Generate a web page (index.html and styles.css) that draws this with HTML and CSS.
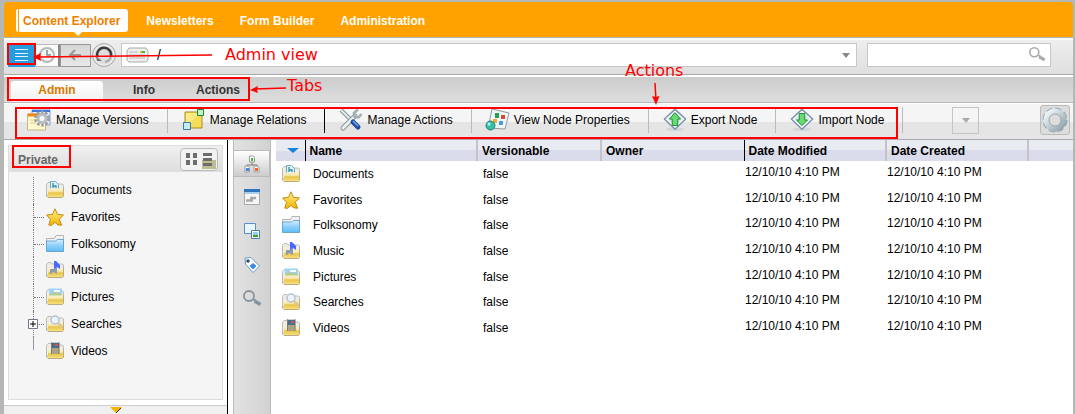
FILE: index.html
```html
<!DOCTYPE html>
<html lang="en">
<head>
<meta charset="utf-8">
<title>Content Explorer</title>
<link rel="stylesheet" href="styles.css">
</head>
<body>
<svg class="defs" aria-hidden="true">
  <defs>
    <linearGradient id="gold" x1="0" y1="0" x2="0" y2="1"><stop offset="0" stop-color="#fbf4d2"/><stop offset=".4" stop-color="#f6e29a"/><stop offset=".5" stop-color="#e8c448"/><stop offset="1" stop-color="#f8e07c"/></linearGradient>
    <linearGradient id="sky" x1="0" y1="0" x2="0" y2="1"><stop offset="0" stop-color="#d8efff"/><stop offset=".5" stop-color="#8fd0fa"/><stop offset="1" stop-color="#5cbcf8"/></linearGradient>
    <linearGradient id="starfill" x1="0" y1="0" x2="0" y2="1"><stop offset="0" stop-color="#fff08c"/><stop offset="1" stop-color="#f4b400"/></linearGradient>
    <linearGradient id="steel" x1="0" y1="0" x2="1" y2="1"><stop offset="0" stop-color="#f4f8fa"/><stop offset="1" stop-color="#8fa2ad"/></linearGradient>
    <symbol id="back" viewBox="0 0 18 18"><path d="M.5 14V3.500L2 1.500h3l1 1.500h10.500l1 1V14z" fill="#f0ede0" stroke="#bcbcb8"/></symbol>
    <symbol id="front" viewBox="0 0 18 18"><path d="M2 7.500h15.500V16H2z" fill="url(#gold)"/><path d="M.5 13v2L2 16.500h14.500l1-1V7" fill="none" stroke="#b9ac86"/></symbol>
    <symbol id="documents" viewBox="0 0 18 18"><use href="#back"/><path d="M4.500.5h5l3 3V9h-8z" fill="#d9f2f6" stroke="#6badbd"/><path d="M7 2v5M7 5h3v2" fill="none" stroke="#3b8ca6" stroke-width="1.300"/><use href="#front"/></symbol>
    <symbol id="favorites" viewBox="0 0 18 18"><path d="M9 .8l2.500 5.500 6 .7-4.300 4.200 2.500 6-3.700-.3L9 14.300l-3.500 3-2.700-.2 1.700-5.700L.6 7l5.900-.7z" fill="url(#starfill)" stroke="#c08a14" stroke-linejoin="round"/></symbol>
    <symbol id="folksonomy" viewBox="0 0 18 18"><path d="M.5 16V3.500h8l1.500-3h7.500V16z" fill="#f2f2f2" stroke="#b4b4b4"/><path d="M.5 6h9l2-1.500h6v12H.5z" fill="url(#sky)" stroke="#6ba6cc"/></symbol>
    <symbol id="music" viewBox="0 0 18 18"><use href="#back"/><use href="#front"/><path d="M8 8V0h2l4 4v4l-3-2v4H8z" fill="#4a68ff"/><path d="M4 8h3l4-2v7l-4-2-2 2H4z" fill="#8d9ab4"/></symbol>
    <symbol id="pictures" viewBox="0 0 18 18"><use href="#back"/><path d="M3 .5h13V8H3z" fill="#9bd4f8"/><path d="M3 6l5-2 8 2v3H3z" fill="#b4cc94"/><path d="M8 3h6" stroke="#fff" stroke-width="2"/><use href="#front"/></symbol>
    <symbol id="searches" viewBox="0 0 18 18"><use href="#back"/><use href="#front"/><circle cx="9" cy="5" r="4" fill="#eaf5ff" stroke="#b4c2d2" stroke-width="1.500"/><path d="M12 8l4 4" stroke="#dcc79a" stroke-width="2.500"/></symbol>
    <symbol id="videos" viewBox="0 0 18 18"><use href="#back"/><use href="#front"/><path d="M5 .5h8.500V12H5z" fill="#aaa386"/><path d="M6 1h7v5H6z" fill="#4c6c8c"/><path d="M9 2h3v2H9z" fill="#c85a5c"/><path d="M5.500.500V12M13 .5V12" stroke="#555" stroke-dasharray="1 1"/></symbol>
    <symbol id="lens" viewBox="0 0 20 20"><circle cx="7" cy="7" r="5" fill="none" stroke="currentColor" stroke-width="1.800"/><path d="M11 10l3 2" stroke="currentColor" stroke-width="2"/><path d="M12.500 12l6 3.500" stroke="currentColor" stroke-width="3.500"/></symbol>
    <symbol id="diamond" viewBox="0 0 26 26"><ellipse cx="13" cy="23" rx="10" ry="2" fill="#ccc" opacity=".6"/><path d="M13 1.500L24.500 12 13 23 1.500 12z" fill="#f1f6f9" stroke="#7593aa" stroke-width="1.500" stroke-linejoin="round"/><path d="M13 4l9 8-9 8.500L4 12z" fill="#dce7ed" stroke="#fff"/></symbol>
  </defs>
</svg>

<div class="app">
  <header class="topnav">
    <nav class="nav">
      <a class="nav-link nav-current" href="#">Content Explorer</a>
      <a class="nav-link" href="#">Newsletters</a>
      <a class="nav-link" href="#">Form Builder</a>
      <a class="nav-link" href="#">Administration</a>
    </nav>
  </header>

  <div class="address">
    <div class="address-buttons">
      <button class="square square-blue" type="button" aria-label="Admin view"><svg width="15" height="14" viewBox="0 0 15 14"><path d="M1 1.500h13M1 5.500h13M1 8.500h13M1 12.500h13" stroke="#e6f7ff"/></svg></button>
      <button class="square square-clock" type="button" aria-label="History"><svg width="18" height="18" viewBox="0 0 18 18"><circle cx="9" cy="9" r="7" fill="#f1f4f5" stroke="#b5babb" stroke-width="2"/><path d="M9 4v5h4" fill="none" stroke="#878d8e" stroke-width="1.500"/></svg></button>
      <button class="square square-back" type="button" aria-label="Back"><svg width="18" height="14" viewBox="0 0 18 14"><path d="M8 2L3 7l5 5M3 7h11" fill="none" stroke="#999" stroke-width="2"/></svg></button>
      <button class="round" type="button" aria-label="Refresh"><svg width="26" height="26" viewBox="0 0 26 26"><circle cx="13" cy="13" r="11.500" fill="#dedede" stroke="#aaa"/><circle cx="13" cy="13" r="10" fill="none" stroke="#f2f2f2"/><path d="M6.500 15A7 7 0 1 1 20 14" fill="none" stroke="#3c3c3c" stroke-width="2.500"/><path d="M20 14a7.500 7.500 0 0 1-6 6" fill="none" stroke="#aaa" stroke-width="2"/><path d="M5 14l6 5H6z" fill="#777"/></svg></button>
    </div>
    <div class="path-box">
      <svg class="drive" width="23" height="16" viewBox="0 0 23 16"><path d="M3 1h17l2 3v9l-2 2H3l-2-2V4z" fill="#efefef" stroke="#aaa"/><path d="M3 5h9M3 8h16M3 11h16" stroke="#bbb"/><path d="M14 5h2" stroke="#ecae26" stroke-width="2"/><path d="M16 5h3" stroke="#3eb642" stroke-width="2"/></svg>
      <input class="path-input" type="text" value="/" aria-label="Path">
      <button class="path-drop" type="button" aria-label="Path history"><span class="caret"></span></button>
    </div>
    <div class="search-box">
      <input class="search-input" type="text" aria-label="Search">
      <button class="search-button" type="button" aria-label="Run search"><svg width="18" height="18"><use href="#lens"/></svg></button>
    </div>
  </div>

  <nav class="tabs">
    <a class="tab tab-current" href="#">Admin</a>
    <a class="tab" href="#">Info</a>
    <a class="tab" href="#">Actions</a>
  </nav>

  <div class="actions">
    <button class="action" type="button"><svg width="26" height="24" viewBox="0 0 26 24"><path d="M5 2h18v15H5z" fill="#e6efff" stroke="#8ba2c4"/><path d="M5 3h18" stroke="#3978df" stroke-width="2"/><path d="M.5 6h18v16H.5z" fill="#fff8cc" stroke="#c3b68c"/><path d="M1 7h17" stroke="#f28716" stroke-width="3"/><path d="M3 12h6M3 15h6" stroke="#e0d08c"/><circle cx="15" cy="10.500" r="6.500" fill="none" stroke="#9a9fa4" stroke-width="3" stroke-dasharray="2.600 1.500"/><circle cx="15" cy="10.500" r="4" fill="#fff" stroke="#b8bdc0" stroke-width="3"/></svg>Manage Versions</button>
    <button class="action action-dark" type="button"><svg width="26" height="24" viewBox="0 0 26 24"><path d="M4 4h17v16H4z" fill="#f5dc57" stroke="#ad8b20"/><path d="M5 5h15L5 18z" fill="#faea86"/><path d="M16.500 1.500h6v6h-6z" fill="#c0f2ca" stroke="#138a38"/><path d="M2.500 14.500h7v7h-7z" fill="#c3eafb" stroke="#387b9f"/></svg>Manage Relations</button>
    <button class="action" type="button"><svg width="26" height="24" viewBox="0 0 26 24"><path d="M3 2l10 10" stroke="#87949a" stroke-width="4"/><path d="M3 2l10 10" stroke="#e4ecf0" stroke-width="2"/><path d="M5 20L17 8" stroke="#8c9599" stroke-width="5" stroke-linecap="round"/><path d="M5 20L17 8" stroke="#eef1f2" stroke-width="3" stroke-linecap="round"/><path d="M20 1.500l-4 3.500.5 4 4 .5 3-3.500" fill="none" stroke="#a5aeb2" stroke-width="2.500"/><path d="M15 14l5 5" stroke="#204d9c" stroke-width="5" stroke-linecap="round"/><path d="M15 13l5 5" stroke="#6eaaf1" stroke-width="1.500"/></svg>Manage Actions</button>
    <button class="action" type="button"><svg width="26" height="24" viewBox="0 0 26 24"><path d="M7 1l17 4-4 16-17-1z" fill="#f3f6f7" stroke="#929c9f"/><path d="M10 5h4v5h-4z" fill="#21a253"/><path d="M16 7h4v4h-4z" fill="#e5432f"/><path d="M8 11h4v4H8z" fill="#eead39"/><path d="M14 13h4v4h-4z" fill="#439edb"/><circle cx="5.500" cy="17.500" r="4.500" fill="#37bea6" stroke="#168775"/><circle cx="4" cy="16" r="1.500" fill="#c1fff0"/></svg>View Node Properties</button>
    <button class="action" type="button"><svg width="26" height="24" viewBox="0 0 26 26"><use href="#diamond"/><path d="M13 5l6 7h-3v7h-6v-7H7z" fill="#65dc70" stroke="#16852d"/></svg>Export Node</button>
    <button class="action" type="button"><svg width="26" height="24" viewBox="0 0 26 26"><use href="#diamond"/><path d="M10 6h6v7h3l-6 6-6-6h3z" fill="#65dc70" stroke="#16852d"/></svg>Import Node</button>
    <button class="more" type="button" aria-label="More actions"><span class="caret"></span></button>
    <button class="settings" type="button" aria-label="Preferences"><svg width="28" height="28" viewBox="0 0 28 28"><circle cx="14" cy="14" r="10.500" fill="none" stroke="#91a3ad" stroke-width="4" stroke-dasharray="5.500 2.740"/><circle cx="14" cy="14" r="8.500" fill="none" stroke="url(#steel)" stroke-width="6"/><circle cx="14" cy="14" r="6" fill="#ddd" stroke="#9ba8ae"/></svg></button>
  </div>

  <div class="work">
    <aside class="side">
      <section class="panel">
        <div class="panel-head">
          <h2 class="panel-title">Private</h2>
          <button class="view-switch" type="button" aria-label="Switch view"><svg width="36" height="21" viewBox="0 0 36 21"><path d="M21 11h14v9H21z" fill="#bdbd91"/><path d="M5 4h4v5H5zM12 4h4v5h-4zM5 11h4v5H5zM12 11h4v5h-4zM22 4h9v3h-9zM22 9h9v3h-9zM22 14h9v3h-9z" fill="#6d6d6d"/></svg></button>
        </div>
        <ul class="tree">
          <li class="node node-plain"><a class="node-link" href="#"><svg width="18" height="18"><use href="#documents"/></svg>Documents</a></li>
          <li class="node"><a class="node-link" href="#"><svg width="18" height="18"><use href="#favorites"/></svg>Favorites</a></li>
          <li class="node"><a class="node-link" href="#"><svg width="18" height="18"><use href="#folksonomy"/></svg>Folksonomy</a></li>
          <li class="node node-plain"><a class="node-link" href="#"><svg width="18" height="18"><use href="#music"/></svg>Music</a></li>
          <li class="node"><a class="node-link" href="#"><svg width="18" height="18"><use href="#pictures"/></svg>Pictures</a></li>
          <li class="node"><button class="expand" type="button" aria-label="Expand Searches"><svg width="10" height="10" viewBox="0 0 10 10"><path d="M.5.5h9v9h-9z" fill="#fff" stroke="#75758c"/><path d="M2 5h6M5 2v6" stroke="#000"/></svg></button><a class="node-link" href="#"><svg width="18" height="18"><use href="#searches"/></svg>Searches</a></li>
          <li class="node node-plain"><a class="node-link" href="#"><svg width="18" height="18"><use href="#videos"/></svg>Videos</a></li>
        </ul>
      </section>
      <div class="collapse"><svg width="12" height="7" viewBox="0 0 12 7"><path d="M0 0h12L6 6z" fill="#f5b400"/><path d="M11 1L6 6" stroke="#333"/></svg></div>
    </aside>

    <div class="rail">
      <button class="rail-button rail-current" type="button" aria-label="Tree"><svg width="18" height="18" viewBox="0 0 18 18"><path d="M9 6v4M4 12v-2h10v2" fill="none" stroke="#777"/><path d="M6.500 1h3l2 1.500V7h-5zM2 11h3l1.500 1.500V17H2zM11 11h3l2 1.500V17h-5z" fill="#fff" stroke="#999"/><path d="M8 3h2v3H8z" fill="#35c13c"/><path d="M3 13h3v3H3z" fill="#3c8cef"/><path d="M12 13h3v3h-3z" fill="#ff6229"/></svg></button>
      <button class="rail-button" type="button" aria-label="Form"><svg width="16" height="16" viewBox="0 0 16 16"><path d="M.5 1h15v14.500H.5z" fill="#f6f6f6" stroke="#aaa"/><path d="M0 1.500h16" stroke="#2e75bd" stroke-width="3"/><path d="M1 4h14" stroke="#a5d0f4" stroke-width="2"/><path d="M2 11.500h7M6 9h6" stroke="#aaa" stroke-width="2.500"/></svg></button>
      <button class="rail-button" type="button" aria-label="Relations"><svg width="16" height="16" viewBox="0 0 16 16"><path d="M.5.500h11v10H.5z" fill="#eaf6ff" stroke="#5792ca"/><path d="M7.500 7.500h8v8h-8z" fill="#fff" stroke="#527ea4"/><path d="M9 9h5v3H9z" fill="#91cfff"/><path d="M9 12h5v2H9z" fill="#429b21"/></svg></button>
      <button class="rail-button" type="button" aria-label="Tags"><svg width="16" height="16" viewBox="0 0 16 16"><path d="M1 1l6-.5L15.500 9 9 15.500 1.500 7z" fill="#fff" stroke="#6999ce"/><circle cx="4" cy="4" r="1.800" fill="#354f75"/><path d="M9 6l3.500 3L9 12.500 5.500 9z" fill="#3d88e4"/></svg></button>
      <button class="rail-button" type="button" aria-label="Saved searches"><svg width="20" height="20"><use href="#lens"/></svg></button>
    </div>

    <main class="content">
      <table class="files">
        <colgroup><col class="c-icon"><col class="c-name"><col class="c-version"><col class="c-owner"><col class="c-date"><col class="c-created"><col></colgroup>
        <thead><tr><th class="sort dark" aria-label="Type"><span class="sort-caret"></span></th><th>Name</th><th>Versionable</th><th class="dark">Owner</th><th>Date Modified</th><th>Date Created</th><th class="last"></th></tr></thead>
        <tbody>
          <tr><td class="type"><svg width="18" height="18"><use href="#documents"/></svg></td><td class="name">Documents</td><td class="version">false</td><td></td><td class="date">12/10/10 4:10 PM</td><td class="date">12/10/10 4:10 PM</td><td></td></tr>
          <tr><td class="type"><svg width="18" height="18"><use href="#favorites"/></svg></td><td class="name">Favorites</td><td class="version">false</td><td></td><td class="date">12/10/10 4:10 PM</td><td class="date">12/10/10 4:10 PM</td><td></td></tr>
          <tr><td class="type"><svg width="18" height="18"><use href="#folksonomy"/></svg></td><td class="name">Folksonomy</td><td class="version">false</td><td></td><td class="date">12/10/10 4:10 PM</td><td class="date">12/10/10 4:10 PM</td><td></td></tr>
          <tr><td class="type"><svg width="18" height="18"><use href="#music"/></svg></td><td class="name">Music</td><td class="version">false</td><td></td><td class="date">12/10/10 4:10 PM</td><td class="date">12/10/10 4:10 PM</td><td></td></tr>
          <tr><td class="type"><svg width="18" height="18"><use href="#pictures"/></svg></td><td class="name">Pictures</td><td class="version">false</td><td></td><td class="date">12/10/10 4:10 PM</td><td class="date">12/10/10 4:10 PM</td><td></td></tr>
          <tr><td class="type"><svg width="18" height="18"><use href="#searches"/></svg></td><td class="name">Searches</td><td class="version">false</td><td></td><td class="date">12/10/10 4:10 PM</td><td class="date">12/10/10 4:10 PM</td><td></td></tr>
          <tr><td class="type"><svg width="18" height="18"><use href="#videos"/></svg></td><td class="name">Videos</td><td class="version">false</td><td></td><td class="date">12/10/10 4:10 PM</td><td class="date">12/10/10 4:10 PM</td><td></td></tr>
        </tbody>
      </table>
    </main>
  </div>
</div>

<svg class="notes" width="1075" height="414" viewBox="0 0 1075 414">
  <g fill="none" stroke="#f00" stroke-width="2">
    <rect x="8" y="44" width="27" height="20"/>
    <rect x="8" y="78" width="241" height="22"/>
    <rect x="16" y="108" width="881" height="30"/>
    <rect x="13" y="146" width="57" height="21"/>
    <path d="M212 55L38 57M286 88l-32 1M655 83l1 18" stroke-width="1.500"/>
  </g>
  <g fill="#f00">
    <path d="M33 57l8-4-1 4 1 4zM250 90l8-4-1 3.500 1 3.500zM656 105l-4-9 3.500 1 4-1z"/>
    <text class="note" x="225" y="60">Admin view</text>
    <text class="note" x="287" y="91">Tabs</text>
    <text class="note" x="625" y="76">Actions</text>
  </g>
</svg>
</body>
</html>
```

FILE: styles.css
```css
* { box-sizing: border-box; }

body {
  margin: 0;
  background: #b5b7b5;
  color: #000;
  font: 12px/16px "Liberation Sans", Arial, sans-serif;
}

a { color: inherit; text-decoration: none; }

button {
  margin: 0;
  padding: 0;
  border: 0;
  background: none;
  color: inherit;
  font: inherit;
}

input {
  min-width: 0;
  padding: 0;
  border: 0;
  outline: 0;
  background: none;
  font: inherit;
}

svg { display: block; flex: none; }
.defs { position: absolute; width: 0; height: 0; }

.app {
  display: flex;
  flex-direction: column;
  min-height: 100vh;
  padding: 2px 2px 0 4px;
}

/* Top navigation */
.topnav {
  padding: 7px 11px 5px;
  border-bottom: 1px solid #b5b7b5;
  border-radius: 4px 4px 0 0;
  background: #ffa200;
}

.nav { display: flex; gap: 10px; }

.nav-link {
  padding: 4px 8px 3px;
  color: #fff;
  font-weight: bold;
}

.nav-current {
  position: relative;
  padding-left: 4px;
  border-left: 4px double #ffa200;
  border-radius: 3px;
  background: #fff;
  color: #ef7d00;
}

.nav-current::after {
  content: "";
  position: absolute;
  top: 100%;
  left: 50%;
  border: 4px solid transparent;
  border-top-color: #fff;
  border-bottom: 0;
}

/* Address bar */
.address {
  display: flex;
  align-items: center;
  gap: 10px;
  padding: 3px 22px 7px 4px;
  border-top: 2px solid #fff;
  border-bottom: 1px solid #aaa;
  background: linear-gradient(#eee, #dfdfdf);
}

.address-buttons { display: flex; align-items: center; height: 24px; width: 103px; }

.square {
  display: flex;
  flex: none;
  align-items: center;
  justify-content: center;
  height: 23px;
}

.square-blue { width: 27px; background: #259ddf; }
.square-clock { width: 25px; border: 1px solid #bbb; border-right: 2px solid #888; background: #fafafa; }
.square-back { width: 31px; border: 1px solid #999; background: linear-gradient(#d6d6d6, #e8e8e8); }
.round { flex: none; }

.path-box,
.search-box {
  display: flex;
  align-items: center;
  height: 24px;
  border: 1px solid #c8c8c8;
  background: #fff;
}

.path-box { flex: 1; padding: 0 6px 0 4px; }
.path-input { flex: 1; margin-left: 8px; font-size: 14px; }
.search-box { width: 184px; padding-right: 4px; }
.search-input { flex: 1; }
.search-button { color: #aaa; }

.caret {
  display: block;
  border: 4px solid transparent;
  border-top: 5px solid #888;
  border-bottom: 0;
}

/* Tabs */
.tabs {
  display: flex;
  padding: 4px 7px 0;
  border-top: 2px solid #fff;
  border-bottom: 1px solid #b8b8b8;
  background: linear-gradient(#ccc, #dedede);
}

.tab {
  padding: 1px 21px 4px;
  color: #333;
  font-weight: bold;
  text-align: center;
}

.tab:last-child { padding-left: 20px; }

.tab-current {
  width: 92px;
  margin-right: 9px;
  border-radius: 3px 3px 0 0;
  background: linear-gradient(#fff, #f0f0f0);
  color: #d87b00;
}

/* Actions */
.actions {
  display: flex;
  align-items: center;
  height: 37px;
  padding: 0 3px 3px 10px;
  border-top: 1px solid #fff;
  border-bottom: 1px solid #aaa;
  background: linear-gradient(#f5f5f5 0 50%, #e5e5e5 50% 100%);
}

.action {
  display: flex;
  align-items: center;
  gap: 3px;
  height: 26px;
  padding: 0 18px 0 13px;
  border-right: 1px solid #bbb;
  white-space: nowrap;
}

.action-dark { border-right: 1px solid #000; }

.more {
  display: flex;
  align-items: center;
  justify-content: center;
  width: 27px;
  height: 27px;
  margin-left: auto;
  margin-right: 61px;
  border: 1px solid #c4c4c4;
}

.more .caret { border-top-color: #aaa; }

.settings {
  border: 1px solid #bbb;
  border-radius: 3px;
  background: #dcdcdc;
}

/* Work area */
.work { display: flex; flex: 1; background: #fff; }

.side {
  display: flex;
  flex-direction: column;
  width: 224px;
  border-right: 1px solid #000;
}

.panel {
  flex: 1;
  margin: 5px 4px;
  border: 1px solid #ddd;
  background: #f5f5f5;
}

.panel-head {
  display: flex;
  align-items: center;
  justify-content: space-between;
  height: 26px;
  padding: 0 4px 0 9px;
  background: linear-gradient(#f0f0f0, #dedede);
}

.panel-title { margin: 2px 0 0; color: #666; font-size: 12px; }
.view-switch { border: 1px solid #bbb; border-radius: 4px; background: #f2f2f2; overflow: hidden; }

.tree {
  display: grid;
  grid-auto-rows: 1fr;
  height: 187px;
  margin: 5px 0 0 24px;
  padding: 0;
  list-style: none;
}

.node {
  position: relative;
  display: flex;
  align-items: center;
  padding-left: 12px;
  border-left: 1px dotted #777;
}

.node::before {
  content: "";
  position: absolute;
  left: 0;
  top: 50%;
  width: 10px;
  border-top: 1px dotted #777;
}

.node-plain::before { display: none; }
.node:last-child { border-image: linear-gradient(#999 50%, transparent 50%) 1; }
.node-link { display: flex; align-items: center; gap: 7px; }
.expand { position: absolute; left: -6px; z-index: 1; }

.collapse {
  display: flex;
  justify-content: center;
  height: 9px;
  padding-top: 1px;
  border-top: 1px solid #ccc;
  background: #f0f0f0;
}

.rail {
  display: flex;
  flex-direction: column;
  width: 38px;
  margin: 0 5px;
  padding-top: 10px;
  border: solid #bbb;
  border-width: 0 1px;
  background: linear-gradient(90deg, #e2e2e2, #d2d2d2);
}

.rail-button {
  display: flex;
  align-items: center;
  justify-content: center;
  height: 34px;
  color: #87939c;
}

.rail-current {
  height: 27px;
  margin-bottom: 3px;
  border: 1px solid #bbb;
  border-left: 0;
  background: linear-gradient(#fff, #ccc);
}

/* File list */
.content { flex: 1; min-width: 0; }

.files {
  width: 100%;
  height: 201px;
  border-collapse: collapse;
  table-layout: fixed;
}

.c-icon { width: 29px; }
.c-name { width: 172px; }
.c-version { width: 124px; }
.c-owner { width: 143px; }
.c-date { width: 142px; }
.c-created { width: 142px; }

.files th {
  height: 21px;
  padding: 0 0 0 4px;
  border-right: 2px solid #c4c4c8;
  background: linear-gradient(#e9ebf3 50%, #dadceb 50%);
  text-align: left;
}

.files .dark { border-right: 1px solid #000; }
.files .last { border-right: 0; }
.files td { padding: 0; }
.files .type { padding-left: 6px; }
.files .name { padding-left: 8px; }
.files .version { padding-left: 6px; }
.files .date { padding: 0 0 4px 1px; }
.files .sort { padding-left: 11px; }

.sort-caret {
  display: block;
  width: 12px;
  border: 6px solid transparent;
  border-top: 5px solid #1685df;
  border-bottom: 0;
}

/* Callouts */
.notes { position: absolute; top: 0; left: 0; pointer-events: none; }
.note { font: 16px "DejaVu Sans", sans-serif; }
```
